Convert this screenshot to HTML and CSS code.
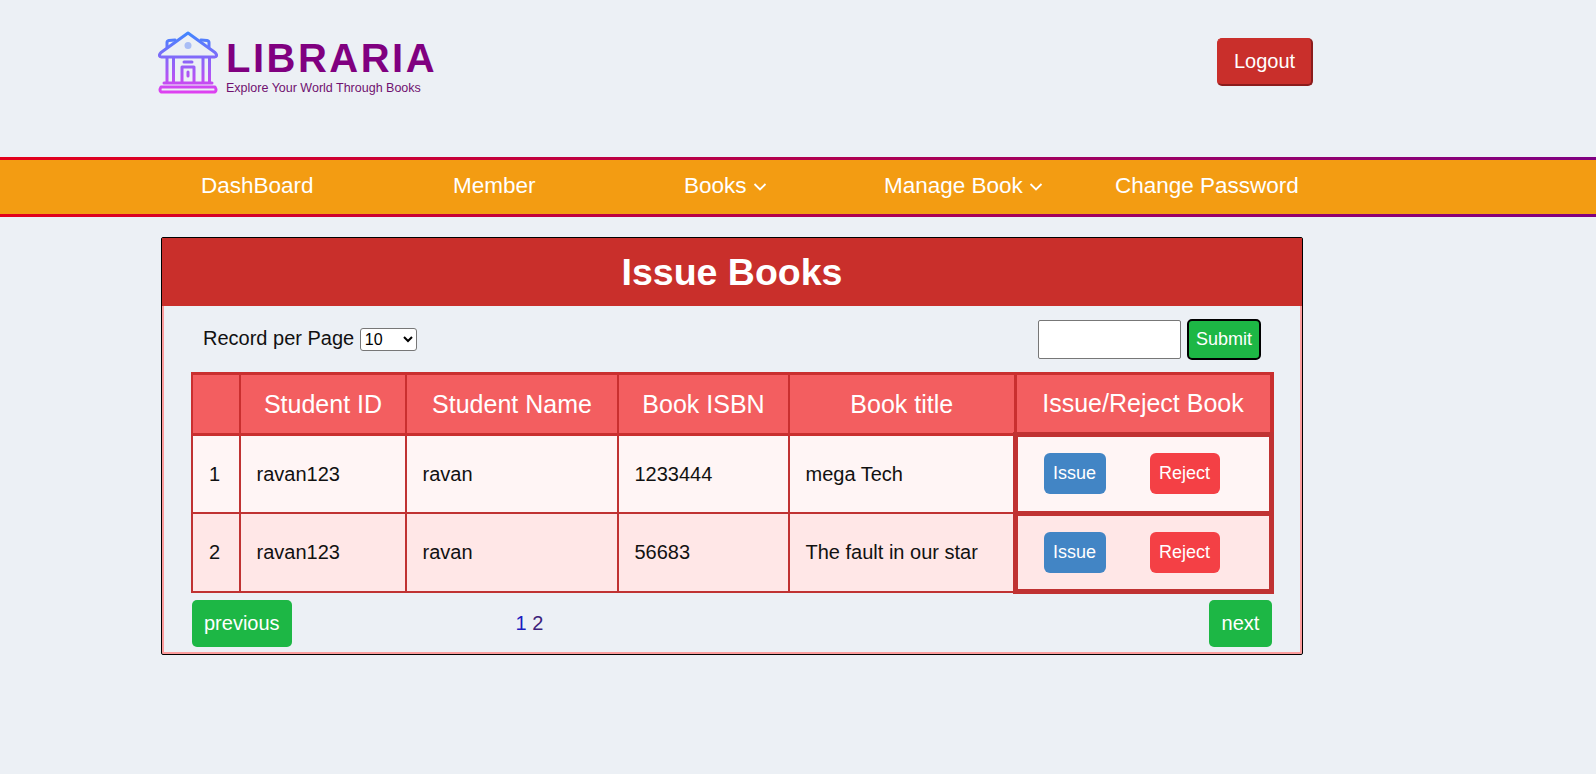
FILE: index.html
```html
<!DOCTYPE html>
<html lang="en">
<head>
  <meta charset="UTF-8">
  <title>Libraria - Issue Books</title>
  <link rel="stylesheet" href="styles.css">
</head>
<body>
  <header class="top-bar">
    <div class="logo">
      <svg class="logo-icon" width="60" height="66" viewBox="0 0 60 66" fill="none">
        <defs>
          <linearGradient id="logoGrad" gradientUnits="userSpaceOnUse" x1="0" y1="2" x2="0" y2="64">
            <stop offset="0" stop-color="#3f87ff"/>
            <stop offset="1" stop-color="#e23ff0"/>
          </linearGradient>
        </defs>
        <g stroke="url(#logoGrad)" stroke-width="3" stroke-linejoin="round" stroke-linecap="round">
          <path d="M9 17 V12.500 Q9 11 11 10.500 L17 10"/>
          <path d="M51 17 V12.500 Q51 11 49 10.500 L43 10"/>
          <path d="M30 3 L57 22.500 Q60.500 26.500 56.500 27 H3.500 Q-0.500 26.500 3 22.500 Z"/>
          <path d="M9 28 V52 M15.500 28 V52 M45 28 V52 M51.500 28 V52"/>
          <path d="M26 32 H34"/>
          <path d="M24 52 V37 H36 V52"/>
          <path d="M30 42 V46"/>
          <path d="M6 53 H54"/>
          <path d="M3 57 H57 Q59 60 57 62 H3 Q1 60 3 57 Z"/>
        </g>
        <circle cx="30" cy="15.500" r="3.500" fill="#a9bdf5"/>
      </svg>
      <div>
        <div class="logo-name">LIBRARIA</div>
        <div class="logo-tag">Explore Your World Through Books</div>
      </div>
    </div>
    <button class="logout-btn">Logout</button>
  </header>

  <nav class="main-nav">
    <a href="#">DashBoard</a>
    <a href="#">Member</a>
    <a href="#">Books <svg class="caret" width="14" height="14" viewBox="0 0 14 14" fill="none"><path d="M1.500 4 L7 9.500 L12.500 4" stroke="#fff" stroke-width="1.800"/></svg></a>
    <a href="#">Manage Book <svg class="caret" width="14" height="14" viewBox="0 0 14 14" fill="none"><path d="M1.500 4 L7 9.500 L12.500 4" stroke="#fff" stroke-width="1.800"/></svg></a>
    <a href="#">Change Password</a>
  </nav>

  <main class="card">
    <h1 class="card-title">Issue Books</h1>

    <div class="toolbar">
      <label>Record per Page
        <select class="per-page"><option>10</option><option>25</option></select>
      </label>
      <form class="search">
        <input type="text" class="search-input">
        <button type="button" class="submit-btn">Submit</button>
      </form>
    </div>

    <table class="issue-table">
      <colgroup>
        <col class="c-num"><col class="c-id"><col class="c-name"><col class="c-isbn"><col class="c-title"><col class="c-act">
      </colgroup>
      <thead>
        <tr>
          <th></th>
          <th>Student ID</th>
          <th>Student Name</th>
          <th>Book ISBN</th>
          <th>Book title</th>
          <th>Issue/Reject Book</th>
        </tr>
      </thead>
      <tbody>
        <tr>
          <td class="num">1</td>
          <td>ravan123</td>
          <td>ravan</td>
          <td>1233444</td>
          <td>mega Tech</td>
          <td class="actions"><button class="issue-btn">Issue</button><button class="reject-btn">Reject</button></td>
        </tr>
        <tr>
          <td class="num">2</td>
          <td>ravan123</td>
          <td>ravan</td>
          <td>56683</td>
          <td>The fault in our star</td>
          <td class="actions"><button class="issue-btn">Issue</button><button class="reject-btn">Reject</button></td>
        </tr>
      </tbody>
    </table>

    <div class="pager">
      <button class="page-btn">previous</button>
      <span class="page-links"><a href="#">1</a> <a href="#" class="visited">2</a></span>
      <button class="page-btn next-btn">next</button>
    </div>
  </main>
</body>
</html>
```
FILE: styles.css
```css
body {
  margin: 0;
  background-color: #ecf0f5;
  font-family: "Liberation Sans", Arial, sans-serif;
  font-size: 20px;
  color: #111;
}

button {
  font-family: inherit;
  color: white;
  cursor: pointer;
}

/* header */
.top-bar {
  display: flex;
  justify-content: space-between;
  width: 1155px;
  height: 157px;
  margin-left: 158px;
  box-sizing: border-box;
  padding-top: 30px;
}

.logo {
  display: flex;
  align-items: flex-start;
  height: 66px;
}

.logo-icon {
  margin-right: 8px;
}

.logo-name {
  font-size: 40px;
  line-height: 46px;
  margin-top: 5px;
  font-weight: bold;
  letter-spacing: 2.500px;
  color: #800080;
}

.logo-tag {
  font-size: 12.500px;
  line-height: 15px;
  color: #701070;
}

.logout-btn {
  align-self: flex-start;
  width: 96px;
  height: 48px;
  margin-top: 8px;
  font-size: 20px;
  background-color: #c92f2b;
  border: 1px solid #c92f2b;
  border-right: 2px solid #8b1c1c;
  border-bottom: 2px solid #8b1c1c;
  border-radius: 5px;
}

/* nav */
.main-nav {
  display: grid;
  grid-template-columns: 252px 231px 200px 231px auto;
  align-items: center;
  height: 54px;
  padding-left: 201px;
  background: linear-gradient(#f39c12, #f39c12) padding-box, linear-gradient(90deg, #e3001b, #800080) border-box;
  border-top: 3px solid transparent;
  border-bottom: 3px solid transparent;
}

.main-nav a {
  position: relative;
  top: -1px;
  font-size: 22.500px;
  color: white;
  text-decoration: none;
}

.caret {
  vertical-align: -1px;
}

/* card */
.card {
  width: 1142px;
  height: 418px;
  margin: 20px 0 0 161px;
  box-sizing: border-box;
  border: 1px solid black;
  border-radius: 2px;
  box-shadow: inset 0 0 0 2px #fc9c9c;
}

.card-title {
  margin: 0;
  height: 68px;
  line-height: 68px;
  font-size: 37.500px;
  text-align: center;
  color: white;
  background-color: #c92f2b;
}

.toolbar {
  display: flex;
  justify-content: space-between;
  align-items: center;
  height: 66px;
  padding: 0 41px;
}

.per-page {
  width: 57px;
  height: 23px;
  margin-left: 0;
  font-family: inherit;
  font-size: 16px;
  background-color: white;
  border: 1px solid #777;
  border-radius: 3px;
}

.search {
  display: flex;
  align-items: center;
  gap: 6px;
}

.search-input {
  width: 143px;
  height: 39px;
  box-sizing: border-box;
  border: 1px solid #777;
  border-radius: 2px;
}

.submit-btn {
  width: 74px;
  height: 41px;
  padding: 0;
  font-size: 18px;
  background-color: #1db745;
  border: 2px solid black;
  border-radius: 5px;
}

/* table */
.issue-table {
  width: 1083px;
  margin-left: 29px;
  table-layout: fixed;
  border-collapse: collapse;
}

.c-num { width: 48px; }
.c-id { width: 166px; }
.c-name { width: 212px; }
.c-isbn { width: 171px; }
.c-title { width: 226px; }

.issue-table th, .issue-table td {
  border: 2px solid #c03232;
}

.issue-table th {
  height: 57px;
  padding: 0;
  font-size: 25px;
  font-weight: normal;
  color: white;
  background-color: #f35e60;
  border-color: #c92f2f;
  border-width: 3px 2px;
}

.issue-table th:last-child {
  border-left-width: 3px;
  border-right-width: 4px;
}

.issue-table td {
  height: 73.500px;
  padding: 0 0 0 15.500px;
}

.issue-table tbody tr:nth-child(1) td {
  background-color: #fff5f5;
}

.issue-table tbody tr:nth-child(2) td {
  background-color: #ffe7e7;
}

.issue-table td.num {
  padding: 0 3px 0 0;
  text-align: center;
}

.issue-table td.actions {
  border-width: 5px;
  padding: 0 0 0 26px;
}

.issue-btn, .reject-btn {
  height: 41px;
  padding: 0;
  font-size: 18px;
  border: none;
  border-radius: 6px;
  vertical-align: middle;
}

.issue-btn {
  width: 62px;
  margin-right: 44px;
  background-color: #4285c5;
}

.reject-btn {
  width: 70px;
  background-color: #f44045;
}

/* pager */
.pager {
  display: flex;
  align-items: center;
  height: 47px;
  margin: 6px 30px 0 30px;
}

.page-btn {
  height: 47px;
  padding: 0 12px;
  font-size: 20px;
  background-color: #1db745;
  border: none;
  border-radius: 5px;
}

.next-btn {
  width: 63px;
  padding: 0;
}

.page-links {
  margin-left: 224px;
  margin-right: auto;
}

.page-links a {
  color: #1c1cc0;
  text-decoration: none;
}

.page-links a.visited {
  color: #3c1f7a;
}
```
